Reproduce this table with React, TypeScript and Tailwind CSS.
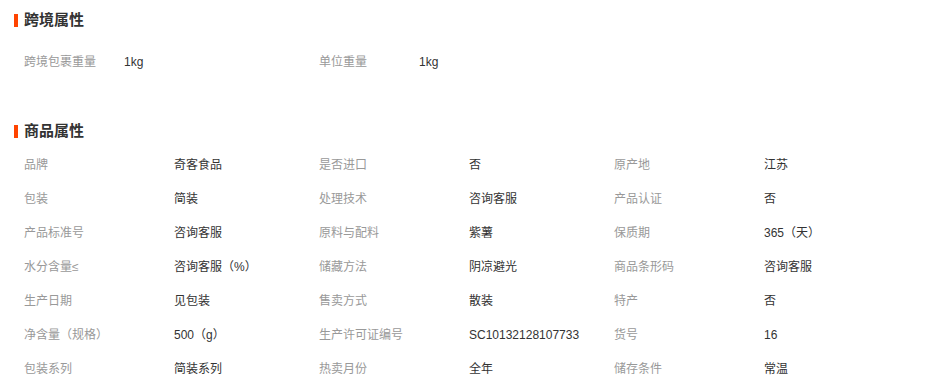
import React from "react";

const cross: [string, string][] = [
  ["跨境包裹重量", "1kg"],
  ["单位重量", "1kg"],
];

const attrs: [string, string][] = [
  ["品牌", "奇客食品"],
  ["是否进口", "否"],
  ["原产地", "江苏"],
  ["包装", "简装"],
  ["处理技术", "咨询客服"],
  ["产品认证", "否"],
  ["产品标准号", "咨询客服"],
  ["原料与配料", "紫薯"],
  ["保质期", "365（天）"],
  ["水分含量≤", "咨询客服（%）"],
  ["储藏方法", "阴凉避光"],
  ["商品条形码", "咨询客服"],
  ["生产日期", "见包装"],
  ["售卖方式", "散装"],
  ["特产", "否"],
  ["净含量（规格）", "500（g）"],
  ["生产许可证编号", "SC10132128107733"],
  ["货号", "16"],
  ["包装系列", "简装系列"],
  ["热卖月份", "全年"],
  ["储存条件", "常温"],
];

function Header({ title }: { title: string }) {
  return (
    <div className="flex items-center h-[20px]">
      <div className="w-[4px] h-[13px] bg-[#ff4400]" />
      <div className="ml-[6px] text-[15px] font-bold text-[#333] leading-[20px]">{title}</div>
    </div>
  );
}

export default function App() {
  return (
    <div
      className="w-[927px] h-[391px] bg-white pl-[14px] overflow-hidden"
      style={{ fontFamily: '"Liberation Sans", "Noto Sans CJK SC", sans-serif' }}
    >
      <div className="pt-[10px]">
        <Header title="跨境属性" />
      </div>
      <div className="mt-[15px] pl-[10px] grid grid-cols-[100px_195px_100px_195px] text-[12px] leading-[34px]">
        {cross.map(([k, v]) => (
          <React.Fragment key={k}>
            <div className="text-[#999]">{k}</div>
            <div className="text-[#333]">{v}</div>
          </React.Fragment>
        ))}
      </div>
      <div className="mt-[42px]">
        <Header title="商品属性" />
      </div>
      <div className="mt-[7px] pl-[10px] grid grid-cols-[150px_145px_150px_145px_150px_145px] text-[12px] leading-[34px]">
        {attrs.map(([k, v]) => (
          <React.Fragment key={k}>
            <div className="text-[#999] whitespace-nowrap">{k}</div>
            <div className="text-[#333] whitespace-nowrap">{v}</div>
          </React.Fragment>
        ))}
      </div>
    </div>
  );
}
